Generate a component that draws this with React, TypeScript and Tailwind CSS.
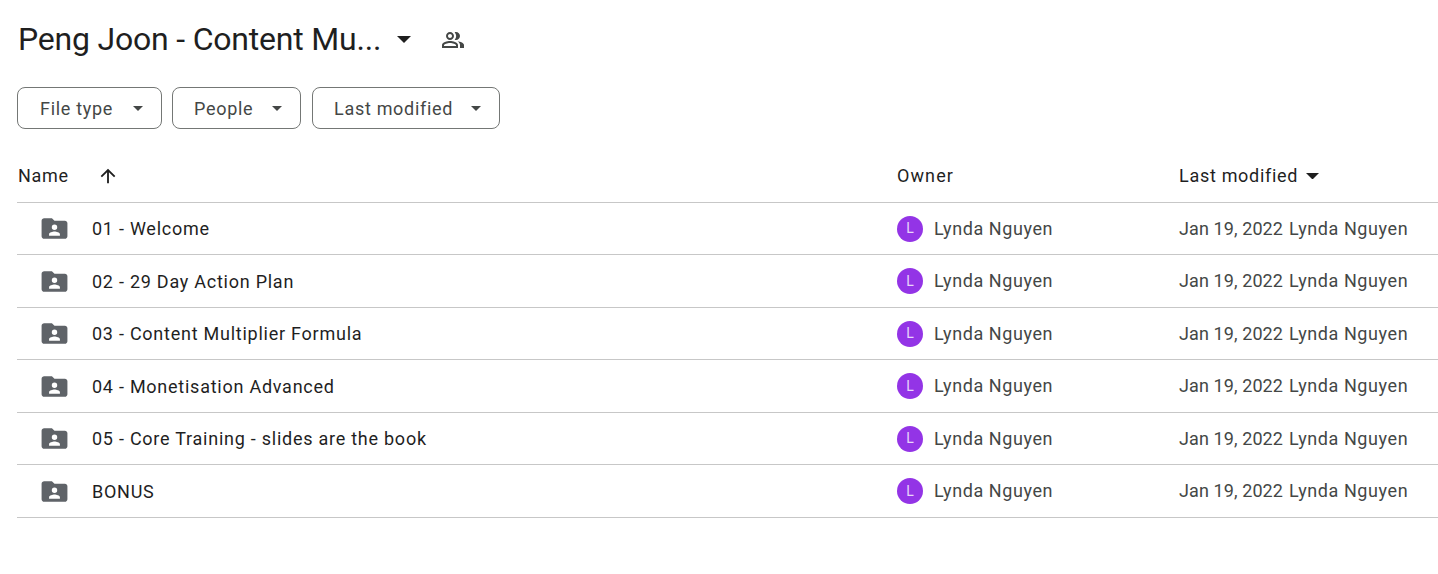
import { MdArrowUpward, MdOutlinePeopleAlt } from "react-icons/md";

const FOLDERS = [
  "01 - Welcome",
  "02 - 29 Day Action Plan",
  "03 - Content Multiplier Formula",
  "04 - Monetisation Advanced",
  "05 - Core Training - slides are the book",
  "BONUS",
];

function Caret({ className }: { className: string }) {
  return (
    <svg viewBox="0 0 10 5" className={className} fill="currentColor" aria-hidden="true">
      <path d="M0 0l5 5 5-5z" />
    </svg>
  );
}

function SharedFolder() {
  return (
    <svg viewBox="0 0 24 24" className="mt-[0.5px] h-[31px] w-[31px] text-[#5f6368]" fill="currentColor" aria-hidden="true">
      <path
        fillRule="evenodd"
        d="M20 6h-8l-2-2H4c-1.1 0-2 .9-2 2v12c0 1.1.9 2 2 2h16c1.1 0 2-.9 2-2V8c0-1.1-.9-2-2-2zm-8 2.9a2.1 2.1 0 1 1 0 4.2 2.1 2.1 0 0 1 0-4.2zm4.2 8.7H7.8v-1.1c0-1.4 2.8-2.1 4.2-2.1s4.2.7 4.2 2.1v1.1z"
      />
    </svg>
  );
}

function FilterChip({ label, size }: { label: string; size: string }) {
  return (
    <button
      type="button"
      className={`flex h-[42px] items-center justify-between rounded-lg border border-[#747775] pr-[18px] text-[18px] tracking-[0.7px] text-[#444746] ${size}`}
    >
      <span className="pt-px">{label}</span>
      <Caret className="h-[5px] w-[10px]" />
    </button>
  );
}

export default function App() {
  return (
    <div className="h-[574px] w-[1438px] overflow-hidden bg-white font-['Roboto',sans-serif] text-[#1f1f1f]">
      <div className="flex h-[78px] items-center pl-[18px]">
        <h1 className="text-[32px] font-normal leading-none tracking-[-0.2px]">Peng Joon - Content Mu...</h1>
        <Caret className="ml-[16px] h-[7px] w-[14px]" />
        <MdOutlinePeopleAlt className="ml-[30px] mt-[2px] text-[24px] text-[#444746]" />
      </div>

      <div className="mt-[9px] flex pl-[17px]">
        <FilterChip label="File type" size="w-[145px] pl-[22px]" />
        <div className="w-[10px]" />
        <FilterChip label="People" size="w-[129px] pl-[21px]" />
        <div className="w-[11px]" />
        <FilterChip label="Last modified" size="w-[188px] pl-[21px]" />
      </div>

      <div className="ml-[17px] mt-[21px]">
        <div className="grid h-[52.5px] grid-cols-[880px_282px_1fr] items-center border-b border-[#c7c7c7] text-[18px] tracking-[0.7px]">
          <div className="flex items-center pl-[1px]">
            Name
            <MdArrowUpward className="ml-[28px] text-[22px]" />
          </div>
          <div className="tracking-[1.1px]">Owner</div>
          <div className="flex items-center">
            Last modified
            <Caret className="ml-[8px] h-[6.5px] w-[13px]" />
          </div>
        </div>

        {FOLDERS.map((name) => (
          <div
            key={name}
            className="grid h-[52.5px] grid-cols-[880px_282px_1fr] items-center border-b border-[#c7c7c7] text-[18px] tracking-[0.75px]"
          >
            <div className="flex items-center pl-[22px]">
              <SharedFolder />
              <span className="ml-[22px] pt-[0.5px]">{name}</span>
            </div>
            <div className="flex items-center tracking-[0.58px] text-[#444746]">
              <span className="mt-[0.5px] flex h-[26px] w-[26px] items-center justify-center rounded-full bg-[#9334e6] text-[14px] tracking-normal text-[#e8d5fa]">
                L
              </span>
              <span className="ml-[11px]">Lynda Nguyen</span>
            </div>
            <div className="flex items-center text-[#444746]">
              <span className="tracking-[0.1px]">Jan 19, 2022</span>
              <span className="ml-[6px] tracking-[0.58px]">Lynda Nguyen</span>
            </div>
          </div>
        ))}
      </div>
    </div>
  );
}
